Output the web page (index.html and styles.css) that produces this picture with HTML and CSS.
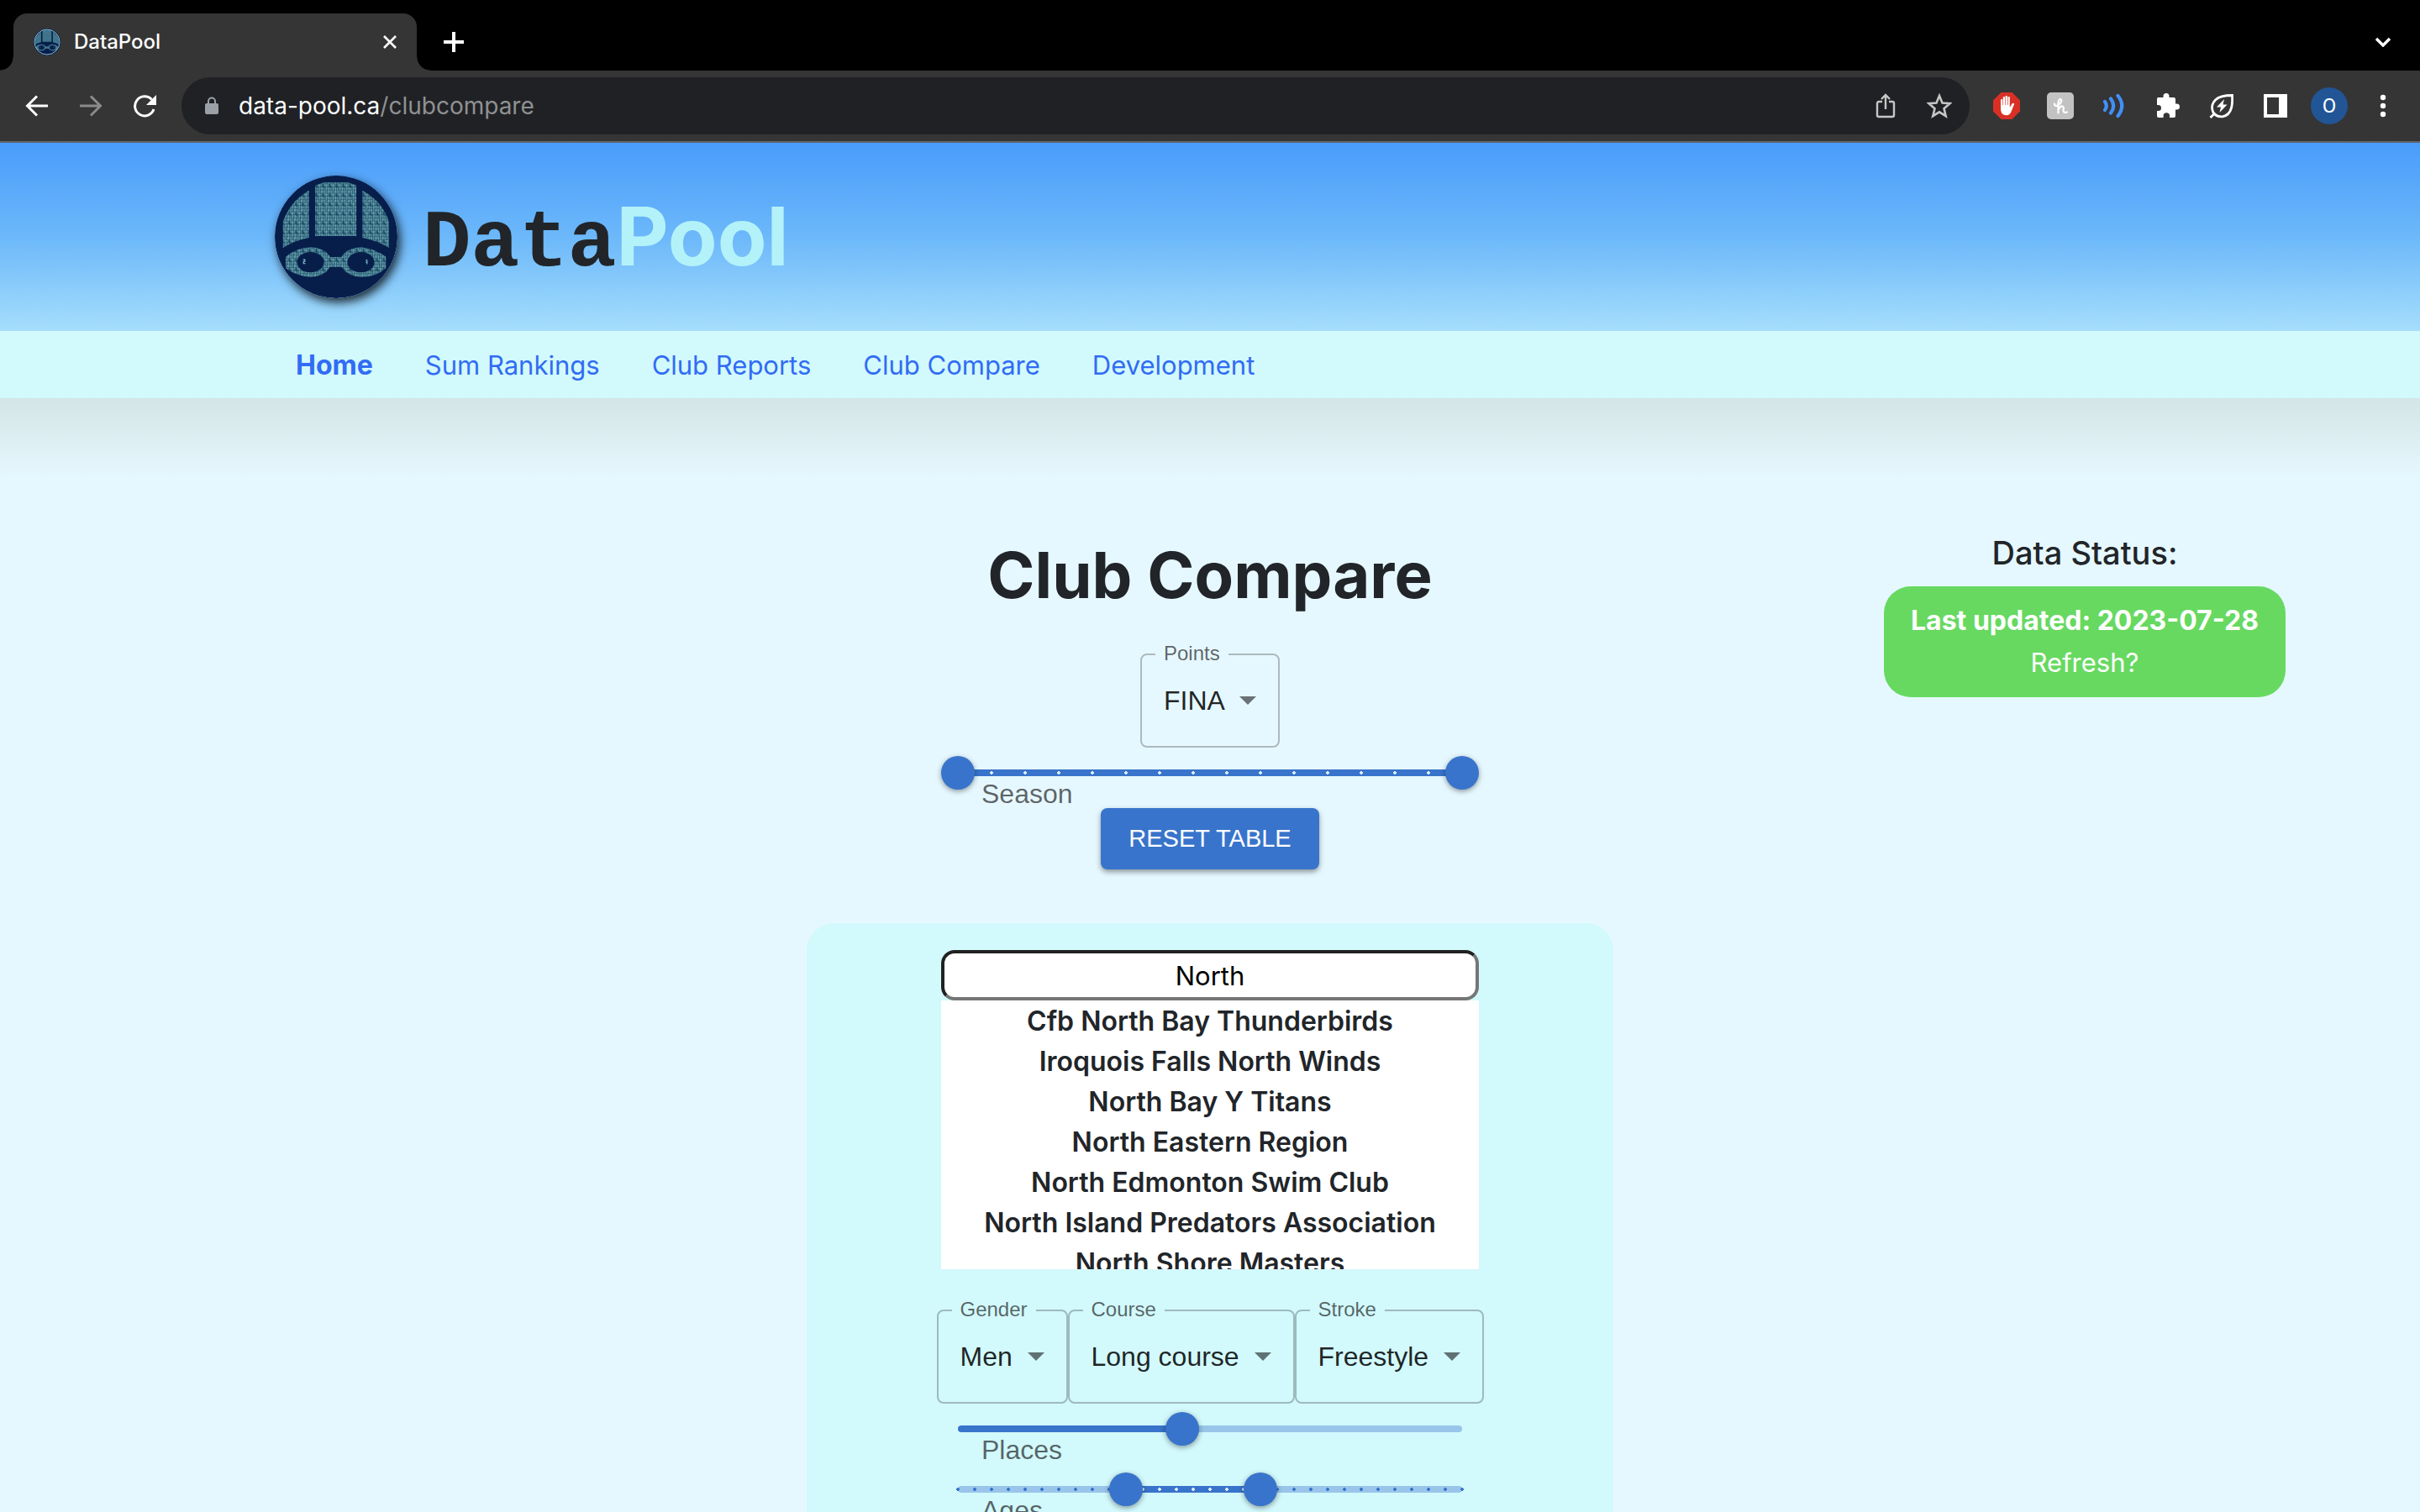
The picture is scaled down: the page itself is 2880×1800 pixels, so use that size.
FILE: index.html
```html
<!DOCTYPE html>
<html lang="en">
<head>
<meta charset="utf-8">
<title>DataPool</title>
<link rel="stylesheet" href="styles.css">
</head>
<body>
<svg class="defs" aria-hidden="true">
  <defs>
    <pattern id="digits" width="24" height="33" patternUnits="userSpaceOnUse">
      <path d="M1 1h4v3h-3v4h3M10 2v7M17 1h4v4h-4v4h4M1 12h4v7h-4zM9 12h3v4h-3M9 19h4M18 12v8M2 23v7M9 23h4v7M17 23h4v4h-4zM17 30h4" fill="none" stroke="#8ccad2" stroke-width="2.2"/>
      <path d="M5 5v4M13 12v7M21 13v6M1 23v3M13 1v6M17 28v4" stroke="#5fa0ae" stroke-width="2.2"/>
    </pattern>
    <symbol id="swimmer" viewBox="51 57 436 436">
      <circle cx="269" cy="275" r="218" fill="#071e4b"/>
      <g fill="#1d4c66">
        <path id="cap" d="M195 92L225 82H312L341 92V272H195zM172 110V278Q120 288 80 314V222Q104 150 172 110zM363 110V278Q415 288 457 314V222Q435 150 363 110z"/>
        <path id="goggles" fill-rule="evenodd" d="M90 346Q128 312 178 312Q228 312 248 347H288Q308 312 360 312Q412 318 446 346V386Q410 418 358 418Q308 414 288 382H248Q228 416 178 418Q122 412 90 386zM130 365a48 36 0 1 0 96 0a48 36 0 1 0 -96 0zM309 365a48 36 0 1 0 96 0a48 36 0 1 0 -96 0z"/>
      </g>
      <path d="M152 356h6v6h-5v8h7M374 358h5v14M374 365h5" fill="none" stroke="#8ccbd3" stroke-width="3"/>
      <use href="#cap" fill="url(#digits)"/>
      <use href="#goggles" fill="url(#digits)"/>
    </symbol>
  </defs>
</svg>

<header class="browser">
  <div class="tabs">
    <div class="tab">
      <svg class="favicon" viewBox="0 0 32 32"><use href="#swimmer" width="32" height="32"/><circle cx="16" cy="16" r="15" fill="none" stroke="#8dbfd6" stroke-width="1"/></svg>
      <span class="tab-title">DataPool</span>
      <button class="plain" aria-label="Close tab"><svg width="16" height="16" viewBox="0 0 16 16"><path d="M1 1l14 14M15 1L1 15" stroke="#fff" stroke-width="2.6"/></svg></button>
    </div>
    <button class="plain new-tab" aria-label="New tab"><svg width="24" height="24" viewBox="0 0 24 24"><path d="M12 0v24M0 12h24" stroke="#fff" stroke-width="4"/></svg></button>
    <button class="plain tab-search" aria-label="Search tabs"><svg width="20" height="12" viewBox="0 0 20 12"><path d="M2 2l8 8 8-8" fill="none" stroke="#fff" stroke-width="3.4"/></svg></button>
  </div>
  <div class="toolbar">
    <div class="nav-buttons">
      <button class="plain" aria-label="Back"><svg width="28" height="28" viewBox="0 0 28 28"><path d="M27 14H3M14 2.500L2.500 14L14 25.500" fill="none" stroke="#fff" stroke-width="3"/></svg></button>
      <button class="plain" aria-label="Forward"><svg width="28" height="28" viewBox="0 0 28 28"><path d="M1 14H25M14 2.500L25.500 14L14 25.500" fill="none" stroke="#8b8b8b" stroke-width="3"/></svg></button>
      <button class="plain" aria-label="Reload"><svg width="28" height="28" viewBox="0 0 28 28"><path d="M25 18A11.500 11.500 0 1 1 22.500 6.500" fill="none" stroke="#fff" stroke-width="3"/><path d="M28 1v12H16z" fill="#fff"/></svg></button>
    </div>
    <div class="omnibox">
      <svg width="16" height="22" viewBox="0 0 16 22"><rect y="8" width="16" height="13" rx="2" fill="#9aa0a6"/><path d="M4 9V5.500a4 4 0 0 1 8 0V9" fill="none" stroke="#9aa0a6" stroke-width="2"/></svg>
      <span class="url"><span class="host">data-pool.ca</span>/clubcompare</span>
      <button class="plain" aria-label="Share"><svg width="24" height="30" viewBox="0 0 24 30"><path d="M8 10H4a2 2 0 0 0-2 2v14a2 2 0 0 0 2 2h16a2 2 0 0 0 2-2V12a2 2 0 0 0-2-2h-4M12 19V2M7 7l5-5 5 5" fill="none" stroke="#c4c7c5" stroke-width="2.400"/></svg></button>
      <button class="plain" aria-label="Bookmark"><svg width="30" height="30" viewBox="0 0 30 30"><path d="M15 3l3.500 8.500 9 .7-7 6 2.200 9L15 22.400 7.300 27.200l2.200-9-7-6 9-.7z" fill="none" stroke="#c4c7c5" stroke-width="2.600"/></svg></button>
    </div>
    <div class="extensions">
      <svg width="32" height="32" viewBox="0 0 32 32"><path d="M9.500 0h13L32 9.500v13L22.500 32h-13L0 22.500v-13z" fill="#d93025"/><path d="M9 8.500q1.100-1.200 2.200 0V15h.6V5.500q1.100-1.200 2.200 0V15h.6V4.500q1.200-1.200 2.400 0V15h.6V5.500q1.100-1.200 2.200 0V18l2.600-4.500q1.600-1.400 2.800.2l-3.400 8.500q-1.600 5-6 5-6 0-6.800-6.500z" fill="#fff"/></svg>
      <svg width="32" height="32" viewBox="0 0 32 32"><rect width="32" height="32" rx="5" fill="#c2c2c2"/><path d="M9 13.500Q9 17 13 15.500Q18.500 12 17 8.500Q14 7 13.500 13V24.500M13.500 21Q16 16 18.500 16.500Q20.500 17 19.500 21Q19 25 24 23.500" fill="none" stroke="#fff" stroke-width="2.200" stroke-linecap="round"/></svg>
      <svg width="32" height="32" viewBox="0 0 32 32"><path d="M5 11q3.600 5 0 10M12 7.500q6.400 8.500 0 17M20.500 4q9.500 12 0 24" fill="none" stroke="#4090f7" stroke-width="4.200" stroke-linecap="round"/></svg>
      <svg width="32" height="32" viewBox="0 0 32 32"><path d="M4.500 6h6V4.500a3.500 3.500 0 0 1 7 0V6H23q2 0 2 2v5.500h1.500a3.500 3.500 0 0 1 0 7H25V28q0 2-2 2h-5v-2a3.700 3.700 0 0 0-7.400 0v2H5q-2 0-2-2v-6h1.500a3.500 3.500 0 0 0 0-7H3V8Q3 6 4.500 6z" fill="#fff"/></svg>
      <svg width="32" height="32" viewBox="0 0 32 32"><path d="M28.500 3.500q.5 10-1 15-2.500 9-10.500 10.300-8 .7-11.500-5.800-3-8 3-14Q14 3.500 28.500 3.500zM2.500 30l5-5" fill="none" stroke="#fff" stroke-width="2.800"/><path d="M19 8l-9 9.500h5L13.500 24l9-9.500h-5z" fill="#fff"/></svg>
      <svg width="32" height="32" viewBox="0 0 32 32"><path fill-rule="evenodd" d="M2 2h28v28H2zM6 6v20h14V6z" fill="#fff"/></svg>
      <span class="avatar">O</span>
      <svg width="32" height="32" viewBox="0 0 32 32"><circle cx="16" cy="6" r="3.200" fill="#fff"/><circle cx="16" cy="16" r="3.200" fill="#fff"/><circle cx="16" cy="26" r="3.200" fill="#fff"/></svg>
    </div>
  </div>
</header>

<div class="page">
  <header class="banner">
    <svg class="logo" viewBox="0 0 146 146"><use href="#swimmer" width="146" height="146"/></svg>
    <span class="brand"><span class="brand-data">Data</span><span class="brand-pool">Pool</span></span>
  </header>
  <nav class="menu">
    <a class="current" href="#">Home</a>
    <a href="#">Sum Rankings</a>
    <a href="#">Club Reports</a>
    <a href="#">Club Compare</a>
    <a href="#">Development</a>
  </nav>
  <main class="content">
    <section class="compare">
      <h1>Club Compare</h1>
      <fieldset class="field">
        <legend><label for="points">Points</label></legend>
        <div class="control"><select id="points"><option>FINA</option></select><svg class="caret" viewBox="0 0 20 10"><path d="M0 0h20L10 10z"/></svg></div>
      </fieldset>
      <div class="slider">
        <div class="rail">
          <div class="track full"></div>
          <div class="marks wide"></div>
          <input type="range" id="season" min="0" max="15" value="0">
          <input type="range" aria-label="Season end" min="0" max="15" value="15">
        </div>
        <label for="season">Season</label>
      </div>
      <button class="reset">RESET TABLE</button>

      <div class="card">
        <input class="search" type="text" aria-label="Club" value="North">
        <ul class="results">
          <li>Cfb North Bay Thunderbirds</li>
          <li>Iroquois Falls North Winds</li>
          <li>North Bay Y Titans</li>
          <li>North Eastern Region</li>
          <li>North Edmonton Swim Club</li>
          <li>North Island Predators Association</li>
          <li>North Shore Masters</li>
        </ul>
        <div class="fields">
          <fieldset class="field">
            <legend><label for="gender">Gender</label></legend>
            <div class="control"><select id="gender"><option>Men</option></select><svg class="caret" viewBox="0 0 20 10"><path d="M0 0h20L10 10z"/></svg></div>
          </fieldset>
          <fieldset class="field">
            <legend><label for="course">Course</label></legend>
            <div class="control"><select id="course"><option>Long course</option></select><svg class="caret" viewBox="0 0 20 10"><path d="M0 0h20L10 10z"/></svg></div>
          </fieldset>
          <fieldset class="field">
            <legend><label for="stroke">Stroke</label></legend>
            <div class="control"><select id="stroke"><option>Freestyle</option></select><svg class="caret" viewBox="0 0 20 10"><path d="M0 0h20L10 10z"/></svg></div>
          </fieldset>
        </div>
        <div class="slider">
          <div class="rail">
            <div class="track places"></div>
            <input type="range" id="places" min="0" max="9" value="4">
          </div>
          <label for="places">Places</label>
        </div>
        <div class="slider">
          <div class="rail">
            <div class="track ages"></div>
            <div class="marks fine"></div>
            <div class="marks chosen"></div>
            <input type="range" id="ages" min="0" max="30" value="10">
            <input type="range" aria-label="Oldest age" min="0" max="30" value="18">
          </div>
          <label for="ages">Ages</label>
        </div>
      </div>
    </section>
    <aside class="status">
      <h2>Data Status:</h2>
      <button class="refresh"><strong>Last updated: 2023-07-28</strong><span>Refresh?</span></button>
    </aside>
  </main>
</div>
</body>
</html>
```
FILE: styles.css
```css
* { box-sizing: border-box; }

body {
  margin: 0;
  height: 100vh;
  display: flex;
  flex-direction: column;
  overflow: hidden;
  background: #e6f8ff;
  color: #212529;
  font: 31px/48px Inter, sans-serif;
}

svg { display: block; flex: none; }
.defs { position: absolute; width: 0; height: 0; }
.plain { display: block; padding: 0; border: 0; background: none; }

/* Browser window */
.browser { flex: none; background: #353535; border-bottom: 2px solid #606468; }
.tabs { display: flex; align-items: center; height: 84px; padding: 16px 34px 0 16px; background: #000; }
.tab {
  position: relative;
  display: flex;
  align-items: center;
  width: 480px;
  height: 68px;
  padding: 0 24px;
  border-radius: 16px 16px 0 0;
  background: #353535;
}
.tab::before, .tab::after {
  content: "";
  position: absolute;
  bottom: 0;
  width: 16px;
  height: 16px;
}
.tab::before { left: -16px; background: radial-gradient(circle at 0 0, #000 15px, #353535 16px); }
.tab::after { right: -16px; background: radial-gradient(circle at 100% 0, #000 15px, #353535 16px); }
.favicon { width: 32px; height: 32px; }
.tab-title { flex: 1; margin-left: 16px; color: #fff; font-size: 24px; font-weight: 500; }
.new-tab { margin-left: 32px; }
.tab-search { margin-left: auto; }

.toolbar { display: flex; align-items: center; height: 84px; padding: 0 28px; }
.nav-buttons { display: flex; gap: 36px; padding: 0 30px 0 2px; }
.omnibox {
  flex: 1;
  display: flex;
  align-items: center;
  height: 68px;
  padding: 0 21px 0 28px;
  border-radius: 34px;
  background: #202124;
}
.url { flex: 1; margin-left: 24px; color: #8f9193; font-size: 28px; }
.host { color: #fff; }
.omnibox button + button { margin-left: 37px; }
.extensions { display: flex; align-items: center; gap: 32px; margin-left: 28px; }
.avatar {
  width: 44px;
  height: 44px;
  margin: 0 -6px;
  border-radius: 50%;
  background: #225596;
  color: #fff;
  font-family: Roboto, sans-serif;
  font-size: 24px;
  line-height: 44px;
  text-align: center;
}

/* Site header */
.page { flex: 1; min-height: 0; overflow: hidden; }
.banner {
  display: flex;
  align-items: center;
  height: 224px;
  padding: 0 327px;
  background: linear-gradient(#499cfb, #6cb8fa 50%, #a5defc);
}
.logo { width: 146px; height: 146px; border-radius: 50%; box-shadow: 3px 5px 12px rgba(0, 0, 0, .8); }
.brand { display: flex; align-items: baseline; margin-left: 30px; padding-top: 8px; font-size: 96px; line-height: 112px; font-weight: 700; }
.brand-data { font-family: "Courier New", "Liberation Mono", monospace; }
.brand-pool { color: #b4f2fa; }
.menu {
  display: flex;
  gap: 62px;
  padding: 17px 352px 15px;
  background: #d2f9fc;
}
.menu a { color: #316cf4; text-decoration: none; }
.menu .current { font-size: 32px; font-weight: 700; }

/* Main area */
.content {
  display: grid;
  grid-template-columns: 1fr 960px 1fr;
  background: linear-gradient(#d4e5e8, #dbecef 36px, #e6f8ff 96px);
}
.compare {
  grid-column: 2;
  display: flex;
  flex-direction: column;
  align-items: center;
  padding-top: 162px;
}
h1 { margin: 0 0 46px; font-size: 76px; line-height: 96px; font-weight: 700; }

.field {
  height: 112px;
  min-width: 0;
  margin: 0;
  padding: 0 16px;
  border: 2px solid rgba(0, 0, 0, .25);
  border-radius: 8px;
  font-family: "Liberation Sans", Arial, sans-serif;
}
.field legend {
  height: 2px;
  padding: 0 10px;
  color: rgba(0, 0, 0, .6);
  font-size: 24px;
  line-height: 0;
}
.field legend label { display: block; }
.control { display: flex; align-items: center; gap: 17px; height: 108px; padding: 0 10px; }
.control select {
  appearance: none;
  padding: 0;
  border: 0;
  background: none;
  color: rgba(0, 0, 0, .87);
  font: 32px/46px "Liberation Sans", Arial, sans-serif;
}
.caret { width: 20px; height: 10px; fill: rgba(0, 0, 0, .54); }
.fields { display: flex; margin-top: 48px; }

.slider {
  width: 640px;
  height: 72px;
  padding-top: 10px;
  color: rgba(0, 0, 0, .6);
  font: 32px/32px "Liberation Sans", Arial, sans-serif;
}
.slider label { display: block; margin-left: 48px; }
.rail { display: grid; align-items: center; height: 40px; margin-bottom: -11px; }
.rail > * { grid-area: 1 / 1; }
.track { height: 8px; margin: 0 20px; border-radius: 4px; background: #98c5e9; }
.track.full { background: #3874cb; }
.track.places { background: linear-gradient(90deg, #3874cb 44%, #98c5e9 44%); }
.track.ages { background: linear-gradient(90deg, #98c5e9 33%, #3874cb 33% 60%, #98c5e9 60%); }
.marks { height: 4px; background: radial-gradient(circle, #d9ecf9 2px, transparent 2px) 0 0 / 40px 4px; }
.marks.fine { margin: 0 10px; background: radial-gradient(circle, #3874cb 2px, transparent 2px) 0 0 / 20px 4px; }
.marks.chosen { width: 160px; margin: 0 230px; background-size: 20px 4px; }
.rail input {
  appearance: none;
  width: 100%;
  height: 40px;
  margin: 0;
  background: none;
  pointer-events: none;
}
.rail input::-webkit-slider-thumb {
  appearance: none;
  width: 40px;
  height: 40px;
  border-radius: 50%;
  background: #3874cb;
  box-shadow: 0 2px 6px rgba(0, 0, 0, .4);
  pointer-events: auto;
}

.reset {
  padding: 12px 33px;
  border: 0;
  border-radius: 8px;
  background: #3874cb;
  box-shadow: 0 3px 6px rgba(0, 0, 0, .4);
  color: #fff;
  font: 29px/49px "Liberation Sans", Arial, sans-serif;
}

.card {
  display: flex;
  flex-direction: column;
  align-items: center;
  width: 100%;
  margin-top: 64px;
  padding: 32px 0;
  border-radius: 32px;
  background: #d2f9fc;
}
.search {
  width: 640px;
  height: 60px;
  padding: 0;
  border: 4px inset #767676;
  border-radius: 16px;
  background: #fff;
  color: #000;
  font: 31px Inter, sans-serif;
  text-align: center;
}
.results {
  width: 640px;
  height: 320px;
  margin: 0;
  padding: 1px 0 0;
  overflow: hidden;
  background: #fff;
  font-size: 32px;
  font-weight: 600;
  list-style: none;
  text-align: center;
}

.status { justify-self: end; margin: 160px 160px 0 0; text-align: center; }
h2 { margin: 0 0 16px; font-size: 38px; line-height: 48px; font-weight: 500; }
.refresh {
  display: block;
  width: 478px;
  padding: 16px;
  border: 0;
  border-radius: 32px;
  background: #67d961;
  color: #fff;
  font: 31px/50px Inter, sans-serif;
}
.refresh strong, .refresh span { display: block; }
.refresh strong { font-size: 32px; font-weight: 700; }
```
